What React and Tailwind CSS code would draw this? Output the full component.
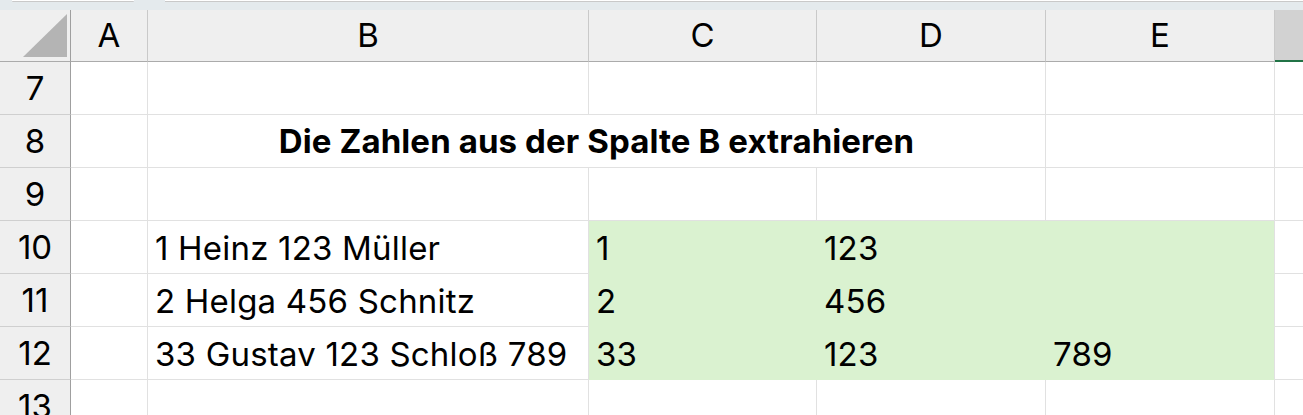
import React from "react";

const font = { fontFamily: "Inter, 'Liberation Sans', sans-serif" };

const cols = ["A", "B", "C", "D", "E"];

function HeaderCell({ children, className = "" }) {
  return (
    <div className={`flex items-center justify-center bg-[#efefef] border-r border-r-[#c9c9c9] border-b border-b-[#ababab] text-[33px] text-black ${className}`}>
      {children}
    </div>
  );
}

function RowHead({ n }) {
  return (
    <div className="flex items-center justify-center pt-[2px] bg-[#efefef] border-r border-r-[#9f9f9f] border-b border-b-[#cfcfcf] text-[33px] text-black">
      {n}
    </div>
  );
}

function Cell({ children, green, noRight, className = "" }) {
  return (
    <div
      className={`flex items-center pl-[7px] pt-[3px] text-[33px] tracking-[0.2px] text-black whitespace-nowrap border-b ${green ? "bg-[#daf2d0] border-b-[#daf2d0]" : "bg-white border-b-[#e1e1e1]"} ${noRight ? "" : green ? "border-r border-r-[#daf2d0]" : "border-r border-r-[#e1e1e1]"} ${className}`}
    >
      {children}
    </div>
  );
}

const data = {
  10: ["1 Heinz 123 Müller", "1", "123", ""],
  11: ["2 Helga 456 Schnitz", "2", "456", ""],
  12: ["33 Gustav 123 Schloß 789", "33", "123", "789"],
};

export default function App() {
  return (
    <div className="w-[1303px] h-[415px] overflow-hidden bg-white" style={font}>
      {/* top strip */}
      <div className="h-[10px] bg-[#e4eaed] flex items-start">
        <div className="w-[12px] h-[2px]" />
        <div className="w-[122px] h-[2px] bg-white border-b border-[#c9c9c9] rounded-b-[1px]" />
        <div className="w-[31px] h-[2px]" />
        <div className="flex-1 h-[2px] bg-white border-b border-[#c9c9c9]" />
      </div>
      <div className="grid grid-cols-[71px_77px_441px_228px_229px_229px_1fr] grid-rows-[52px_53px_53px_53px_53px_53px_53px_53px]">
        {/* header row */}
        <div className="bg-[#efefef] border-r border-r-[#9f9f9f] border-b border-b-[#ababab] relative">
          <svg className="absolute left-0 top-0" width="70" height="51" viewBox="0 0 70 51">
            <polygon points="23,47 67,47 67,4" fill="#b4b4b4" />
          </svg>
        </div>
        {cols.map((c) => (
          <HeaderCell key={c}>{c}</HeaderCell>
        ))}
        <div className="bg-[#d2d2d2] border-b-2 border-b-[#217346]" />

        {[7, 8, 9, 10, 11, 12, 13].map((r) => {
          if (r === 8) {
            return (
              <React.Fragment key={r}>
                <RowHead n={r} />
                <Cell />
                <div className="col-span-3 flex items-center justify-center pt-[2px] bg-white border-r border-r-[#e1e1e1] border-b border-b-[#e1e1e1] text-[33px] font-bold tracking-[0.1px] text-black whitespace-nowrap">
                  Die Zahlen aus der Spalte B extrahieren
                </div>
                <Cell />
                <Cell noRight />
              </React.Fragment>
            );
          }
          const d = data[r];
          return (
            <React.Fragment key={r}>
              <RowHead n={r} />
              <Cell />
              <Cell>{d ? d[0] : ""}</Cell>
              <Cell green={!!d}>{d ? d[1] : ""}</Cell>
              <Cell green={!!d}>{d ? d[2] : ""}</Cell>
              <Cell green={!!d} className={d ? "border-r-[#e1e1e1]" : ""}>{d ? d[3] : ""}</Cell>
              <Cell noRight />
            </React.Fragment>
          );
        })}
      </div>
    </div>
  );
}
